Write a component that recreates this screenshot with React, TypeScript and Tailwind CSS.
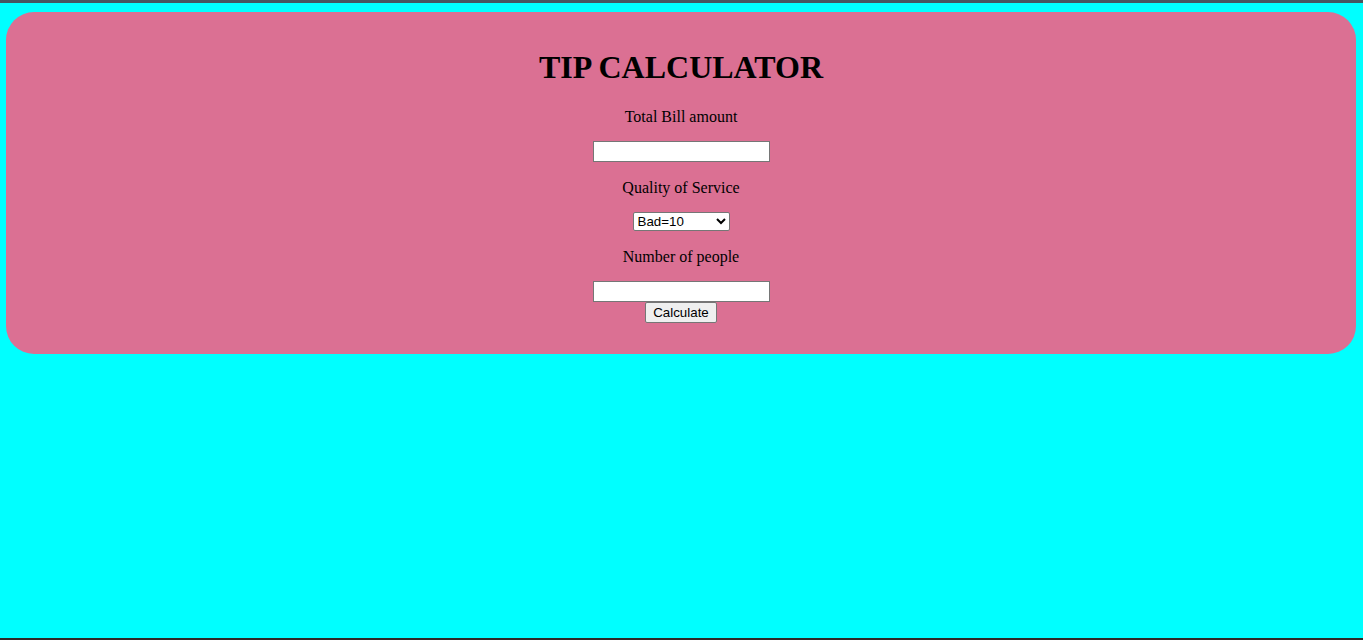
export default function App() {
  return (
    <div
      className="min-h-[640px] h-[640px] bg-[#00ffff] flex flex-col"
      style={{ fontFamily: '"Liberation Serif", "Times New Roman", serif' }}
    >
      <div className="h-[3px] bg-[#46565f] shrink-0" />
      <div className="ml-[6px] mr-[7px] mt-[9px] h-[342px] rounded-[28px] bg-[#db7093] flex flex-col items-center text-black shrink-0">
        <h1 className="mt-[37px] h-[37px] leading-[37px] text-[32px] font-bold">TIP CALCULATOR</h1>
        <p className="mt-[21px] h-[19px] leading-[19px] text-[16px]">Total Bill amount</p>
        <input
          type="text"
          className="mt-[15px] h-[21px] w-[177px] bg-white border border-[#767676] px-[2px] text-[13.33px]"
          style={{ fontFamily: '"Liberation Sans", Arial, sans-serif' }}
        />
        <p className="mt-[16px] h-[19px] leading-[19px] text-[16px]">Quality of Service</p>
        <select
          className="mt-[15px] h-[19px] w-[97px] bg-white border border-[#767676] rounded-[2px] text-[13.33px] text-black"
          style={{ fontFamily: '"Liberation Sans", Arial, sans-serif' }}
          defaultValue="10"
        >
          <option value="10">Bad=10</option>
          <option value="15">Okay=15</option>
          <option value="20">Good=20</option>
        </select>
        <p className="mt-[16px] h-[19px] leading-[19px] text-[16px]">Number of people</p>
        <input
          type="text"
          className="mt-[15px] h-[21px] w-[177px] bg-white border border-[#767676] px-[2px] text-[13.33px]"
          style={{ fontFamily: '"Liberation Sans", Arial, sans-serif' }}
        />
        <button
          className="h-[21px] w-[72px] bg-[#efefef] border border-[#767676] rounded-[2px] text-[13.33px] leading-[19px] text-black"
          style={{ fontFamily: '"Liberation Sans", Arial, sans-serif' }}
        >
          Calculate
        </button>
      </div>
      <div className="flex-1" />
      <div className="h-[2px] bg-[#2e2a27] shrink-0" />
    </div>
  );
}
